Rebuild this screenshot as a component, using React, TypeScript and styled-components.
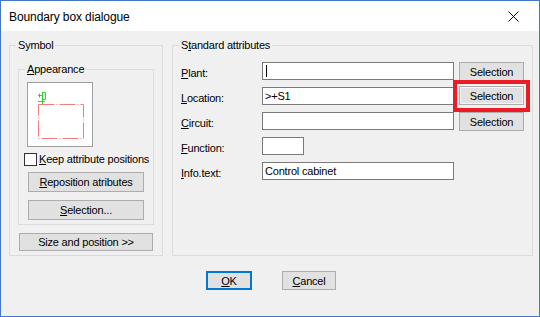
import styled, { createGlobalStyle } from 'styled-components';

const GlobalStyle = createGlobalStyle`
  html, body {
    margin: 0;
    padding: 0;
    background: #ffffff;
  }
  body {
    font-family: 'Liberation Sans', Arial, sans-serif;
    font-size: 11px;
    letter-spacing: -0.2px;
    color: #000000;
  }
`;

export default function App() {
  return (
    <>
      <GlobalStyle />
      <Window>
        <TitleBar>
          <Title>Boundary box dialogue</Title>
          <CloseButton>
            <svg width="11" height="11" viewBox="0 0 11 11">
              <path d="M0.5 0.5 L10.5 10.5 M10.5 0.5 L0.5 10.5" stroke="#000" strokeWidth="1" />
            </svg>
          </CloseButton>
        </TitleBar>
        <Body>
          <Groups>
            <SymbolGroup>
              <Legend>Symbol</Legend>
              <AppearanceGroup>
                <Legend>
                  <U>A</U>ppearance
                </Legend>
                <Preview>
                  <svg width="64" height="63" viewBox="0 0 64 63">
                    {/* attribute marker */}
                    <path
                      d="M14.5 9 V21 M10 12.5 H14 M11.5 10.5 V14.5 M10 18.5 H17 M14.5 9.5 H17.5 V16.5 H14.5"
                      stroke="#22dd22"
                      strokeWidth="1"
                      fill="none"
                    />
                    {/* boundary box */}
                    <rect
                      x="10.5"
                      y="21.5"
                      width="45"
                      height="34"
                      fill="none"
                      stroke="#f47c7c"
                      strokeWidth="1"
                      strokeDasharray="16 2 1 2"
                    />
                  </svg>
                </Preview>
                <CheckRow>
                  <CheckBox />
                  <span>
                    <U>K</U>eep attribute positions
                  </span>
                </CheckRow>
                <PushButton $width={116} $offset={1}>
                  <U>R</U>eposition atributes
                </PushButton>
                <PushButton $width={116} $offset={1} $top={8}>
                  <U>S</U>election...
                </PushButton>
              </AppearanceGroup>
              <PushButton $width={134} $offset={1} $top={8}>
                Size and position &gt;&gt;
              </PushButton>
            </SymbolGroup>

            <AttributesGroup>
              <Legend>
                S<U>t</U>andard attributes
              </Legend>
              <AttrList>
                <AttrRow>
                  <AttrLabel>
                    <U>P</U>lant:
                  </AttrLabel>
                  <Field $width={192}>
                    <Caret />
                  </Field>
                  <SelectButton>Selection</SelectButton>
                </AttrRow>
                <AttrRow>
                  <AttrLabel>
                    <U>L</U>ocation:
                  </AttrLabel>
                  <Field $width={192}>&gt;+S1</Field>
                  <Highlighted>
                    <SelectButton $focused>Selection</SelectButton>
                  </Highlighted>
                </AttrRow>
                <AttrRow>
                  <AttrLabel>
                    <U>C</U>ircuit:
                  </AttrLabel>
                  <Field $width={192} />
                  <SelectButton>Selection</SelectButton>
                </AttrRow>
                <AttrRow>
                  <AttrLabel>
                    <U>F</U>unction:
                  </AttrLabel>
                  <Field $width={42} />
                </AttrRow>
                <AttrRow>
                  <AttrLabel>
                    <U>I</U>nfo.text:
                  </AttrLabel>
                  <Field $width={192}>Control cabinet</Field>
                </AttrRow>
              </AttrList>
            </AttributesGroup>
          </Groups>
          <Footer>
            <DialogButton $default $width={46}>
              <U>O</U>K
            </DialogButton>
            <DialogButton $width={54}>
              <U>C</U>ancel
            </DialogButton>
          </Footer>
        </Body>
      </Window>
    </>
  );
}

const Window = styled.div`
  width: 540px;
  height: 317px;
  box-sizing: border-box;
  border: 1px solid #4577c9;
  background: #f0f0f0;
  display: flex;
  flex-direction: column;
`;

const TitleBar = styled.div`
  height: 30px;
  background: #ffffff;
  display: flex;
  align-items: center;
  justify-content: space-between;
  padding: 0 20px 0 8px;
`;

const Title = styled.div`
  font-size: 12px;
  letter-spacing: -0.1px;
  padding-top: 1px;
`;

const CloseButton = styled.div`
  display: flex;
  align-items: center;
  padding-top: 1px;
`;

const Body = styled.div`
  flex: 1;
  display: flex;
  flex-direction: column;
  padding: 7px 6px 0 8px;
`;

const Groups = styled.div`
  display: flex;
  gap: 9px;
`;

const Group = styled.fieldset`
  margin: 0;
  min-width: 0;
  box-sizing: border-box;
  border: 1px solid #dcdcdc;
  display: flex;
  flex-direction: column;
  align-items: flex-start;
`;

const Legend = styled.legend`
  padding: 0 2px;
  margin-left: -2px;
  line-height: 14px;
  font-size: 11px;
`;

const SymbolGroup = styled(Group)`
  width: 154px;
  height: 218px;
  padding: 10px 8px 4px 8px;
`;

const AttributesGroup = styled(Group)`
  flex: 1;
  height: 218px;
  padding: 10px 8px 4px 8px;
`;

const AppearanceGroup = styled(Group)`
  width: 136px;
  padding: 6px 8px 4px 8px;
`;

const Preview = styled.div`
  width: 64px;
  height: 63px;
  background: #ffffff;
  border: 1px solid #a0a0a0;
  svg {
    display: block;
  }
`;

const CheckRow = styled.label`
  display: flex;
  align-items: center;
  gap: 2px;
  margin: 5px 0 0 -3px;
  height: 14px;
  white-space: nowrap;
`;

const CheckBox = styled.span`
  width: 11px;
  height: 11px;
  background: #ffffff;
  border: 1px solid #333333;
  flex: none;
`;

const U = styled.span`
  text-decoration: underline;
  text-underline-offset: 1px;
`;

const BaseButton = styled.button`
  font-family: 'Liberation Sans', Arial, sans-serif;
  font-size: 11px;
  letter-spacing: -0.2px;
  color: #000000;
  background: #e1e1e1;
  border: 1px solid #adadad;
  border-radius: 0;
  padding: 0;
  box-sizing: border-box;
  display: flex;
  align-items: center;
  justify-content: center;
  white-space: nowrap;
`;

const PushButton = styled(BaseButton)<{ $width: number; $offset?: number; $top?: number }>`
  width: ${(p) => p.$width}px;
  height: 20px;
  margin-left: ${(p) => p.$offset ?? 0}px;
  margin-top: ${(p) => p.$top ?? 6}px;
`;

const AttrList = styled.div`
  display: flex;
  flex-direction: column;
  gap: 7px;
  width: 100%;
`;

const AttrRow = styled.div`
  display: flex;
  align-items: flex-start;
  height: 18px;
`;

const AttrLabel = styled.div`
  width: 81px;
  flex: none;
  line-height: 18px;
  padding-top: 2px;
`;

const Field = styled.div<{ $width: number }>`
  width: ${(p) => p.$width}px;
  height: 18px;
  box-sizing: border-box;
  background: #ffffff;
  border: 1px solid #7a7a7a;
  padding: 0 2px;
  line-height: 15px;
  display: flex;
  align-items: center;
  flex: none;
`;

const Caret = styled.span`
  width: 1px;
  height: 12px;
  background: #000000;
  margin-left: 1px;
`;

const SelectButton = styled(BaseButton)<{ $focused?: boolean }>`
  width: 65px;
  height: 19px;
  margin-left: 5px;
  box-shadow: ${(p) => (p.$focused ? 'inset 0 0 0 1px #f4f4f4' : 'none')};
`;

const Highlighted = styled.div`
  position: relative;
  margin-top: -1px;
  &::after {
    content: '';
    position: absolute;
    left: -1px;
    top: -6px;
    right: -6px;
    bottom: -7px;
    border: 4px solid #ed1c24;
    pointer-events: none;
  }
`;

const Footer = styled.div`
  display: flex;
  justify-content: center;
  gap: 30px;
  margin-top: 15px;
`;

const DialogButton = styled(BaseButton)<{ $default?: boolean; $width: number }>`
  width: ${(p) => p.$width}px;
  height: 19px;
  border: ${(p) => (p.$default ? '2px solid #0078d7' : '1px solid #adadad')};
`;
